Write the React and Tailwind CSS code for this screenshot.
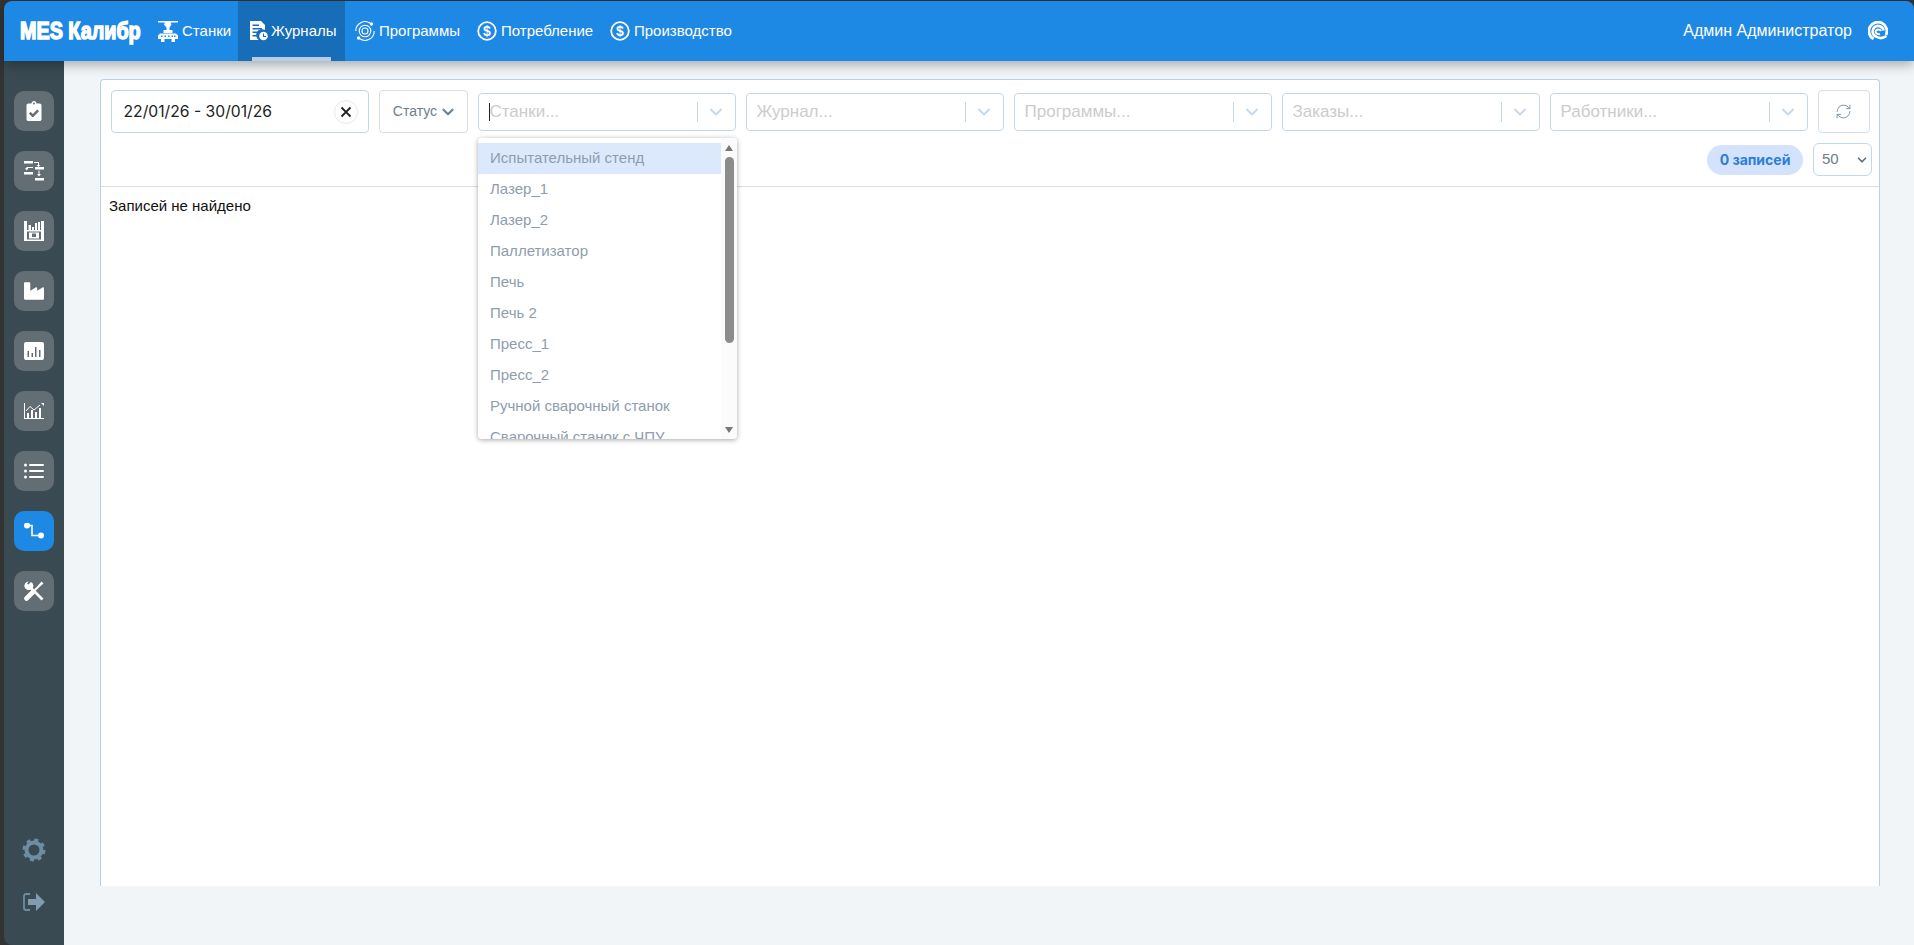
import React from "react";
import { FaClipboardCheck, FaIndustry } from "react-icons/fa";
import { RefreshCw, ChevronDown } from "lucide-react";

const Dollar = () => (
  <svg width="20" height="24" viewBox="0 0 20 24" fill="none">
    <circle cx="10" cy="12" r="8.800" stroke="white" strokeWidth="1.800" />
    <text x="10" y="17" textAnchor="middle" fontSize="14" fontWeight="700" fill="white" fontFamily="Liberation Sans, sans-serif">$</text>
  </svg>
);

const Machine = () => (
  <svg width="20" height="21" viewBox="0 0 20 21" fill="white">
    <path d="M0 0h20v1.500h-7.500l1 2-2 3v2.500h3v3h-9V9h3V6.500l-2.500-3 1-2H0z" />
    <path d="M2 12.500h16l2 2v3.500h-3v3h-3.500v-3h-7v3H3v-3H0v-3.500z" />
    <path d="M3 14.500h1.500V16H3zM6.500 14.500H8V16H6.500zM10 14.500h1.500V16H10zM13.500 14.500H15V16h-1.500zM16 14.500h1.500V16H16z" fill="#1e88e5" />
  </svg>
);

const Journal = () => (
  <svg width="18" height="20" viewBox="0 0 18 20" fill="white">
    <path d="M0 0h11l4 4v5a5.500 5.500 0 0 0-6 10H0z" />
    <path d="M2.500 3.500H9V5H2.500zM2.500 7H12v1.500H2.500zM2.500 10.500H8V12H2.500zM2.500 14H7v1.500H2.500z" fill="#186db8" />
    <circle cx="13.500" cy="15" r="4.300" />
    <path d="M13 12.500h1v2.500h2v1h-3z" fill="#186db8" />
  </svg>
);

const Orbit = () => (
  <svg width="20" height="24" viewBox="0 0 20 24" fill="none" stroke="white" strokeWidth="1.100">
    <circle cx="10" cy="12" r="3" />
    <circle cx="10" cy="12" r="5.800" />
    <path d="M0.800 12A9.200 9.200 0 0 1 15.500 4.500M19.200 12A9.200 9.200 0 0 1 4.500 19.500" />
    <circle cx="16.500" cy="5" r="1.100" fill="white" />
    <circle cx="3.500" cy="19" r="1.100" fill="white" />
  </svg>
);

const Flow = () => (
  <svg width="20" height="20" viewBox="0 0 20 20" fill="white">
    <rect x="0" y="0" width="9" height="2.500" />
    <rect x="0" y="11" width="9" height="2.500" />
    <rect x="11" y="6" width="9" height="2.500" />
    <rect x="11" y="17" width="9" height="2.500" />
    <path d="M10 1h5v3h1.500L14.500 6 12.500 4H14V2h-4zM3 6h6v1H4v1.500H3z" />
    <path d="M3 6 1 7.700 3 9.500zM14.500 9.500h1V13H17l-2 2.500-2-2.500h1.500z" />
  </svg>
);

const Warehouse = () => (
  <svg width="20" height="20" viewBox="0 0 20 20" fill="white">
    <path d="M0 0h3v20H0zM17 0h3v20h-3zM3 18.500h14V20H3zM3 9h14v1.500H3z" />
    <path d="M4.500 4H7v5H4.500zM8 6h2v3H8zM11 2h2v7h-2zM14 1h2v8h-2z" />
    <path fillRule="evenodd" d="M5 11.500h10v6H5zM8 12.500v3.500h4v-3.500z" />
  </svg>
);

const BarsBox = () => (
  <svg width="20" height="18" viewBox="0 0 20 18" fill="white">
    <path
      fillRule="evenodd"
      d="M2 0h16a2 2 0 0 1 2 2v14a2 2 0 0 1-2 2H2a2 2 0 0 1-2-2V2a2 2 0 0 1 2-2zM3.500 9v6h1.500V9zM7.500 11v4H9v-4zM11 5v10h1.500V5zM15 8v7h1.500V8z"
    />
  </svg>
);

const ChartLine = () => (
  <svg width="20" height="16" viewBox="0 0 20 16" fill="white">
    <path d="M0 0h1v15h19v1H0z" />
    <path d="M3 10h2v5H3zM7 7h2v8H7zM11 9h2v6h-2zM15 5h2v10h-2z" />
    <path d="M2 8 6 3.500l4 3.500 6-5" fill="none" stroke="white" strokeWidth="1" />
    <path d="M17 0h3v3z" />
  </svg>
);

const ListIco = () => (
  <svg width="20" height="16" viewBox="0 0 20 16" fill="white">
    <circle cx="1.500" cy="2" r="1.500" />
    <circle cx="1.500" cy="8" r="1.500" />
    <circle cx="1.500" cy="14" r="1.500" />
    <rect x="5" y="1" width="15" height="2" rx="1" />
    <rect x="5" y="7" width="15" height="2" rx="1" />
    <rect x="5" y="13" width="15" height="2" rx="1" />
  </svg>
);

const RouteIco = () => (
  <svg width="20" height="16" viewBox="0 0 20 16" fill="none">
    <path d="M3 2.500h5v10h9" stroke="white" strokeWidth="1.600" />
    <circle cx="3" cy="2.500" r="3" fill="white" />
    <circle cx="17" cy="12.500" r="3" fill="white" />
  </svg>
);

const Tools = () => (
  <svg width="20" height="20" viewBox="0 0 20 20" fill="none">
    <path d="M6 6 18.500 18.500" stroke="white" strokeWidth="2.600" />
    <path d="M2.500 17.500 9 11" stroke="white" strokeWidth="4.600" strokeLinecap="round" />
    <path d="M9 11 15 5" stroke="white" strokeWidth="2" />
    <path d="M14 4.500 17.500 0.500 19.500 2.500 15.500 6z" fill="white" />
    <path d="M4.500 0.500A4.500 4.500 0 0 0 0.500 6 A4.500 4.500 0 0 0 7 8.500L9 6.500A4.500 4.500 0 0 0 7 1L4.500 3.500 3 3z" fill="white" />
  </svg>
);

const Gear = () => (
  <svg width="24" height="24" viewBox="0 0 24 24" fill="none" stroke="#6e8da3">
    <circle cx="12" cy="12" r="7.500" strokeWidth="4" />
    <circle cx="12" cy="12" r="10" strokeWidth="3" strokeDasharray="4 3.850" />
  </svg>
);

const Exit = () => (
  <svg width="24" height="20" viewBox="0 0 24 20" fill="none">
    <path d="M8 2H4a2 2 0 0 0-2 2v12a2 2 0 0 0 2 2h4" stroke="#6e8da3" strokeWidth="1.800" />
    <path d="M6 7h8V1l9 9-9 9v-6H6z" fill="#7f9cb0" />
  </svg>
);

const Swirl = () => (
  <svg width="20" height="20" viewBox="0 0 20 20" fill="none" stroke="white">
    <path d="M18 14A9 9 0 1 0 5.500 18" strokeWidth="2.800" />
    <path d="M15.500 9.500A5.500 5.500 0 1 0 8 15.500 C11 17.500 15 17.500 18.500 15" strokeWidth="2.600" />
    <path d="M13 10A3 3 0 0 0 7.500 10.500C8 13 10.500 13.500 12 13" strokeWidth="2" />
  </svg>
);

const NavItem = ({ icon, label, active, width, gap }) => (
  <div className={`relative flex h-full items-center ${gap} ${active ? "bg-[#186db8]" : ""} ${width}`}>
    {icon}
    <span className="text-[15px] text-white">{label}</span>
    {active && <div className="absolute bottom-0 left-[14px] h-1 w-[79px] bg-[#b5cde8]" />}
  </div>
);

const Rail = ({ children, active }) => (
  <div className={`flex h-10 w-10 items-center justify-center rounded-[10px] ${active ? "bg-[#1e88e5]" : "bg-[#626e74]"}`}>
    {children}
  </div>
);

const Select = ({ placeholder, caret }) => (
  <div className="relative mt-[3px] flex h-[38px] w-[258px] items-center rounded-[4px] border border-[#c3d7e8] bg-white">
    <div className="flex flex-1 items-center pl-[10px]">
      {caret && <div className="h-[18px] w-px bg-[#222]" />}
      <span className="text-[17px] text-[#cccccc]">{placeholder}</span>
    </div>
    <div className="h-[20px] w-px bg-[#c3d7e8]" />
    <div className="flex w-[37px] items-center justify-center">
      <ChevronDown size={20} strokeWidth={2.500} className="text-[#c8dae9]" />
    </div>
  </div>
);

const options = ["Испытательный стенд", "Лазер_1", "Лазер_2", "Паллетизатор", "Печь", "Печь 2", "Пресс_1", "Пресс_2", "Ручной сварочный станок", "Сварочный станок с ЧПУ"];

export default function App() {
  return (
    <div className="h-[945px] w-full overflow-hidden bg-[#333333] pl-1 pt-px font-['Liberation_Sans',sans-serif]">
      <div className="relative z-10 flex h-[60px] items-center justify-between rounded-t-lg bg-[#1e88e5] shadow-[0_4px_12px_rgba(0,0,0,0.3)]">
        <div className="flex h-full items-center">
          <div className="ml-4 w-[126px]">
            <span className="inline-block origin-left scale-x-[0.86] whitespace-nowrap text-[23px] font-bold text-white [-webkit-text-stroke:1.400px_white]">MES Калибр</span>
          </div>
          <div className="flex h-full items-center">
            <NavItem icon={<Machine />} label="Станки" gap="gap-1" width="w-[92px] pl-3" />
            <NavItem icon={<Journal />} label="Журналы" gap="gap-[3px]" active width="w-[107px] pl-3" />
            <NavItem icon={<Orbit />} label="Программы" gap="gap-1" width="w-[122px] pl-[10px]" />
            <NavItem icon={<Dollar />} label="Потребление" gap="gap-1" width="w-[133px] pl-[10px]" />
            <NavItem icon={<Dollar />} label="Производство" gap="gap-1" width="w-[140px] pl-[10px]" />
          </div>
        </div>
        <div className="flex items-center gap-4 pr-[26px]">
          <span className="text-[16px] text-white">Админ Администратор</span>
          <Swirl />
        </div>
      </div>
      <div className="flex h-[884px]">
        <div className="flex w-[60px] flex-col items-center justify-between rounded-bl-lg bg-[#3a4a53] pb-[33px] pt-[30px]">
          <div className="flex flex-col gap-5">
            <Rail><FaClipboardCheck size={20} className="text-white" /></Rail>
            <Rail><Flow /></Rail>
            <Rail><Warehouse /></Rail>
            <Rail><FaIndustry size={20} className="text-white" /></Rail>
            <Rail><BarsBox /></Rail>
            <Rail><ChartLine /></Rail>
            <Rail><ListIco /></Rail>
            <Rail active><RouteIco /></Rail>
            <Rail><Tools /></Rail>
          </div>
          <div className="flex flex-col items-center gap-[30px]">
            <Gear />
            <Exit />
          </div>
        </div>
        <div className="flex-1 bg-[#f2f5f8] pl-9 pr-[34px] pt-[18px]">
          <div className="relative h-[807px] rounded-t-[4px] border-x border-t border-[#b9d1e6] bg-white">
            <div className="flex gap-[10px] pl-[9.500px] pt-[10px]">
              <div className="flex h-[43px] w-[258px] items-center justify-between rounded-[4px] border border-[#c3d7e8] pl-3 pr-[10px]">
                <span className="font-['Inter',sans-serif] text-[15.700px] text-[#222222]">22/01/26 - 30/01/26</span>
                <span className="flex h-6 w-6 items-center justify-center rounded-full border border-[#e8e8e8] text-[#222222]">
                  <svg width="12" height="12" viewBox="0 0 12 12"><path d="M1.500 1.500l9 9M10.500 1.500l-9 9" stroke="#222" strokeWidth="1.800" /></svg>
                </span>
              </div>
              <div className="flex h-[43px] w-[89px] items-center justify-center gap-[2px] rounded-[4px] border border-[#d5dfe7] pl-1">
                <span className="text-[14px] text-[#6d7e8c]">Статус</span>
                <ChevronDown size={18} strokeWidth={3} className="text-[#6d8599]" />
              </div>
              <Select placeholder="Станки..." caret />
              <Select placeholder="Журнал..." />
              <Select placeholder="Программы..." />
              <Select placeholder="Заказы..." />
              <Select placeholder="Работники..." />
              <div className="flex h-[43px] w-[52px] items-center justify-center rounded-[4px] border border-[#d5dfe7]">
                <RefreshCw size={17} strokeWidth={1.200} className="text-[#6d8599]" />
              </div>
            </div>
            <div className="flex h-[53px] items-center justify-end gap-[10px] pr-[7px]">
              <span className="flex h-[30px] w-[96px] items-center justify-center rounded-[15px] bg-[#d4e2fc] font-['Inter',sans-serif] text-[14px] font-bold text-[#2a7fd9]">0 записей</span>
              <div className="flex h-[33px] w-[59px] items-center justify-between rounded-[6px] border border-[#c3d7e8] pl-[8px] pr-[2px]">
                <span className="text-[15px] text-[#6d7e8c]">50</span>
                <ChevronDown size={14} strokeWidth={3} className="text-[#5f7180]" />
              </div>
            </div>
            <div className="border-t border-[#dddddd] px-2 pt-2 text-[15px] text-[#111111]">Записей не найдено</div>
            <div className="absolute left-[377px] top-[58px] flex h-[301px] w-[259px] overflow-hidden rounded-[4px] bg-white shadow-[0_1px_5px_rgba(0,0,0,0.35)]">
              <div className="h-full w-[243px] overflow-hidden pt-[5px]">
                {options.map((o, i) => (
                  <div key={o} className={`flex h-[31px] items-center whitespace-nowrap pl-3 text-[15px] text-[#8e9dad] ${i === 0 ? "bg-[#dce9fd]" : ""}`}>{o}</div>
                ))}
              </div>
              <div className="flex flex-1 flex-col items-center bg-[#fbfbfb]">
                <div className="mt-[7px] h-0 w-0 border-x-[4px] border-b-[6px] border-x-transparent border-b-[#777]" />
                <div className="mt-[6px] h-[186px] w-[9px] rounded-full bg-[#8c8c8c]" />
                <div className="mt-[84px] h-0 w-0 border-x-[4px] border-t-[6px] border-x-transparent border-t-[#777]" />
              </div>
            </div>
          </div>
        </div>
      </div>
    </div>
  );
}
